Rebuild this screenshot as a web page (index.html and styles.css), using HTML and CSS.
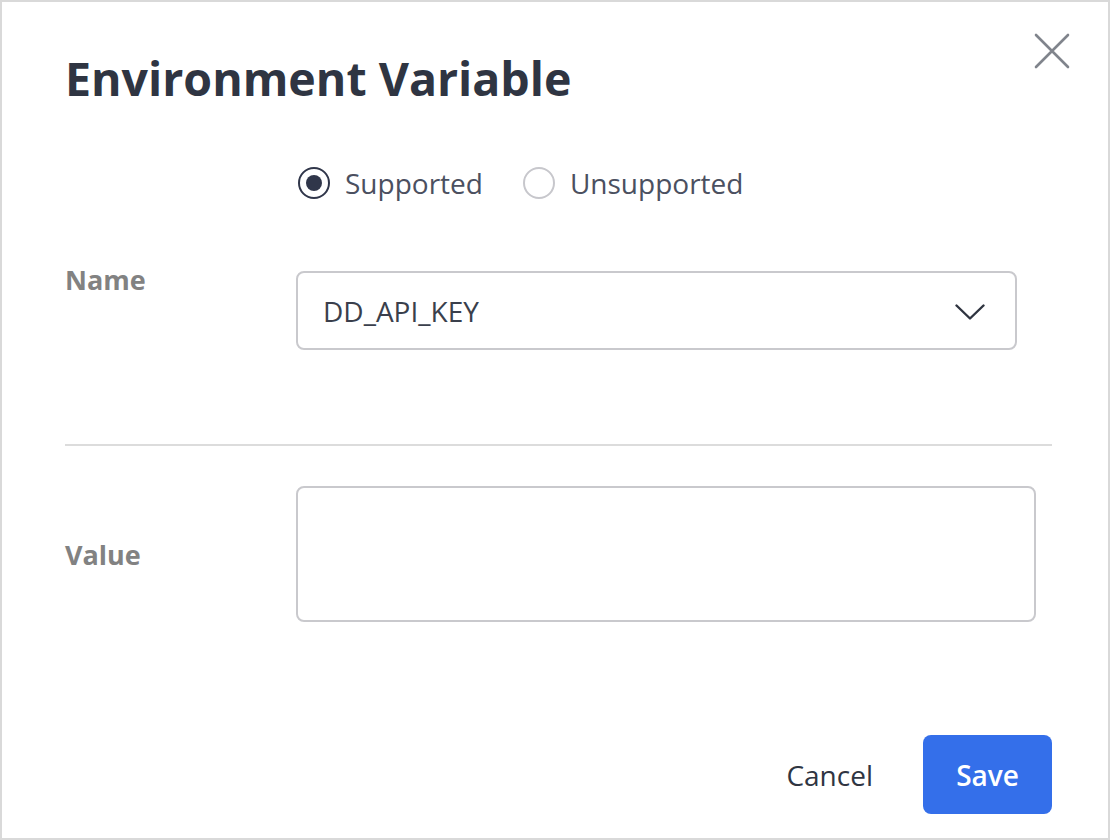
FILE: index.html
```html
<!DOCTYPE html>
<html>
<head>
<meta charset="utf-8">
<link rel="stylesheet" href="styles.css">
</head>
<body>
<div class="dialog">
  <button class="close" aria-label="Close">
    <svg width="36" height="36" viewBox="0 0 36 36"><path d="M2 2 L34 34 M34 2 L2 34" stroke="#80848c" stroke-width="2.6" fill="none" stroke-linecap="round"/></svg>
  </button>
  <h1 class="title">Environment Variable</h1>
  <div class="radios">
    <label class="radio"><span class="dot checked"></span>Supported</label>
    <label class="radio"><span class="dot"></span>Unsupported</label>
  </div>
  <div class="row name-row">
    <div class="label">Name</div>
    <div class="select">
      <span>DD_API_KEY</span>
      <svg width="30" height="16" viewBox="0 0 30 16"><path d="M1.5 1.5 L15 14.5 L28.5 1.5" stroke="#2f3440" stroke-width="2.4" fill="none" stroke-linejoin="round" stroke-linecap="round"/></svg>
    </div>
  </div>
  <hr class="divider">
  <div class="row value-row">
    <div class="label">Value</div>
    <div class="textarea"></div>
  </div>
  <div class="footer">
    <button class="cancel">Cancel</button>
    <button class="save">Save</button>
  </div>
</div>
</body>
</html>
```
FILE: styles.css
```css
html, body { margin: 0; padding: 0; background: #fff; }
body { font-family: "Open Sans", "Noto Sans", sans-serif; }
.dialog {
  position: relative;
  width: 1110px;
  height: 840px;
  box-sizing: border-box;
  border: 2px solid #d9d9d9;
  padding: 0 56px 0 63px;
}
.close {
  position: absolute;
  top: 31px;
  right: 38px;
  width: 36px;
  height: 36px;
  padding: 0;
  border: 0;
  background: none;
}
.close svg { display: block; }
.title {
  margin: 0;
  padding-top: 47px;
  font-size: 46.5px;
  line-height: 58px;
  font-weight: 700;
  color: #2f3542;
  letter-spacing: 0;
}
.radios {
  display: flex;
  gap: 40px;
  margin-top: 58px;
  margin-left: 233px;
  height: 36px;
  align-items: center;
}
.radio {
  display: flex;
  align-items: center;
  gap: 15px;
  font-size: 28px;
  color: #4b5060;
}
.dot {
  width: 32px;
  height: 32px;
  box-sizing: border-box;
  border-radius: 50%;
  border: 2px solid #c7c7cc;
  display: inline-flex;
  align-items: center;
  justify-content: center;
}
.dot.checked { border-color: #30364a; }
.dot.checked::after {
  content: "";
  width: 16px;
  height: 16px;
  border-radius: 50%;
  background: #30364a;
}
.row {
  display: grid;
  grid-template-columns: 231px 1fr;
}
.label {
  font-size: 27px;
  font-weight: 700;
  color: #828282;
}
.name-row { margin-top: 70px; }
.name-row .label { margin-top: -10px; }
.select {
  width: 721px;
  height: 79px;
  box-sizing: border-box;
  border: 2px solid #c9c9cd;
  border-radius: 8px;
  display: flex;
  align-items: center;
  justify-content: space-between;
  padding: 0 30px 0 25px;
  font-size: 28px;
  color: #3a3f4c;
}
.select svg { display: block; margin-top: 2px; }
.divider {
  margin: 94px 0 0;
  border: 0;
  border-top: 2px solid #dcdcdc;
  height: 0;
}
.value-row { margin-top: 40px; align-items: center; }
.textarea {
  width: 740px;
  height: 136px;
  box-sizing: border-box;
  border: 2px solid #c9c9cd;
  border-radius: 8px;
}
.footer {
  display: flex;
  justify-content: flex-end;
  align-items: center;
  gap: 50px;
  margin-top: 113px;
}
.cancel {
  border: 0;
  background: none;
  font-family: inherit;
  font-size: 28px;
  color: #2f3542;
  padding: 0;
}
.save {
  width: 129px;
  height: 79px;
  border: 0;
  border-radius: 8px;
  background: #346fea;
  color: #fff;
  font-family: inherit;
  font-size: 28px;
  font-weight: 600;
}
```
